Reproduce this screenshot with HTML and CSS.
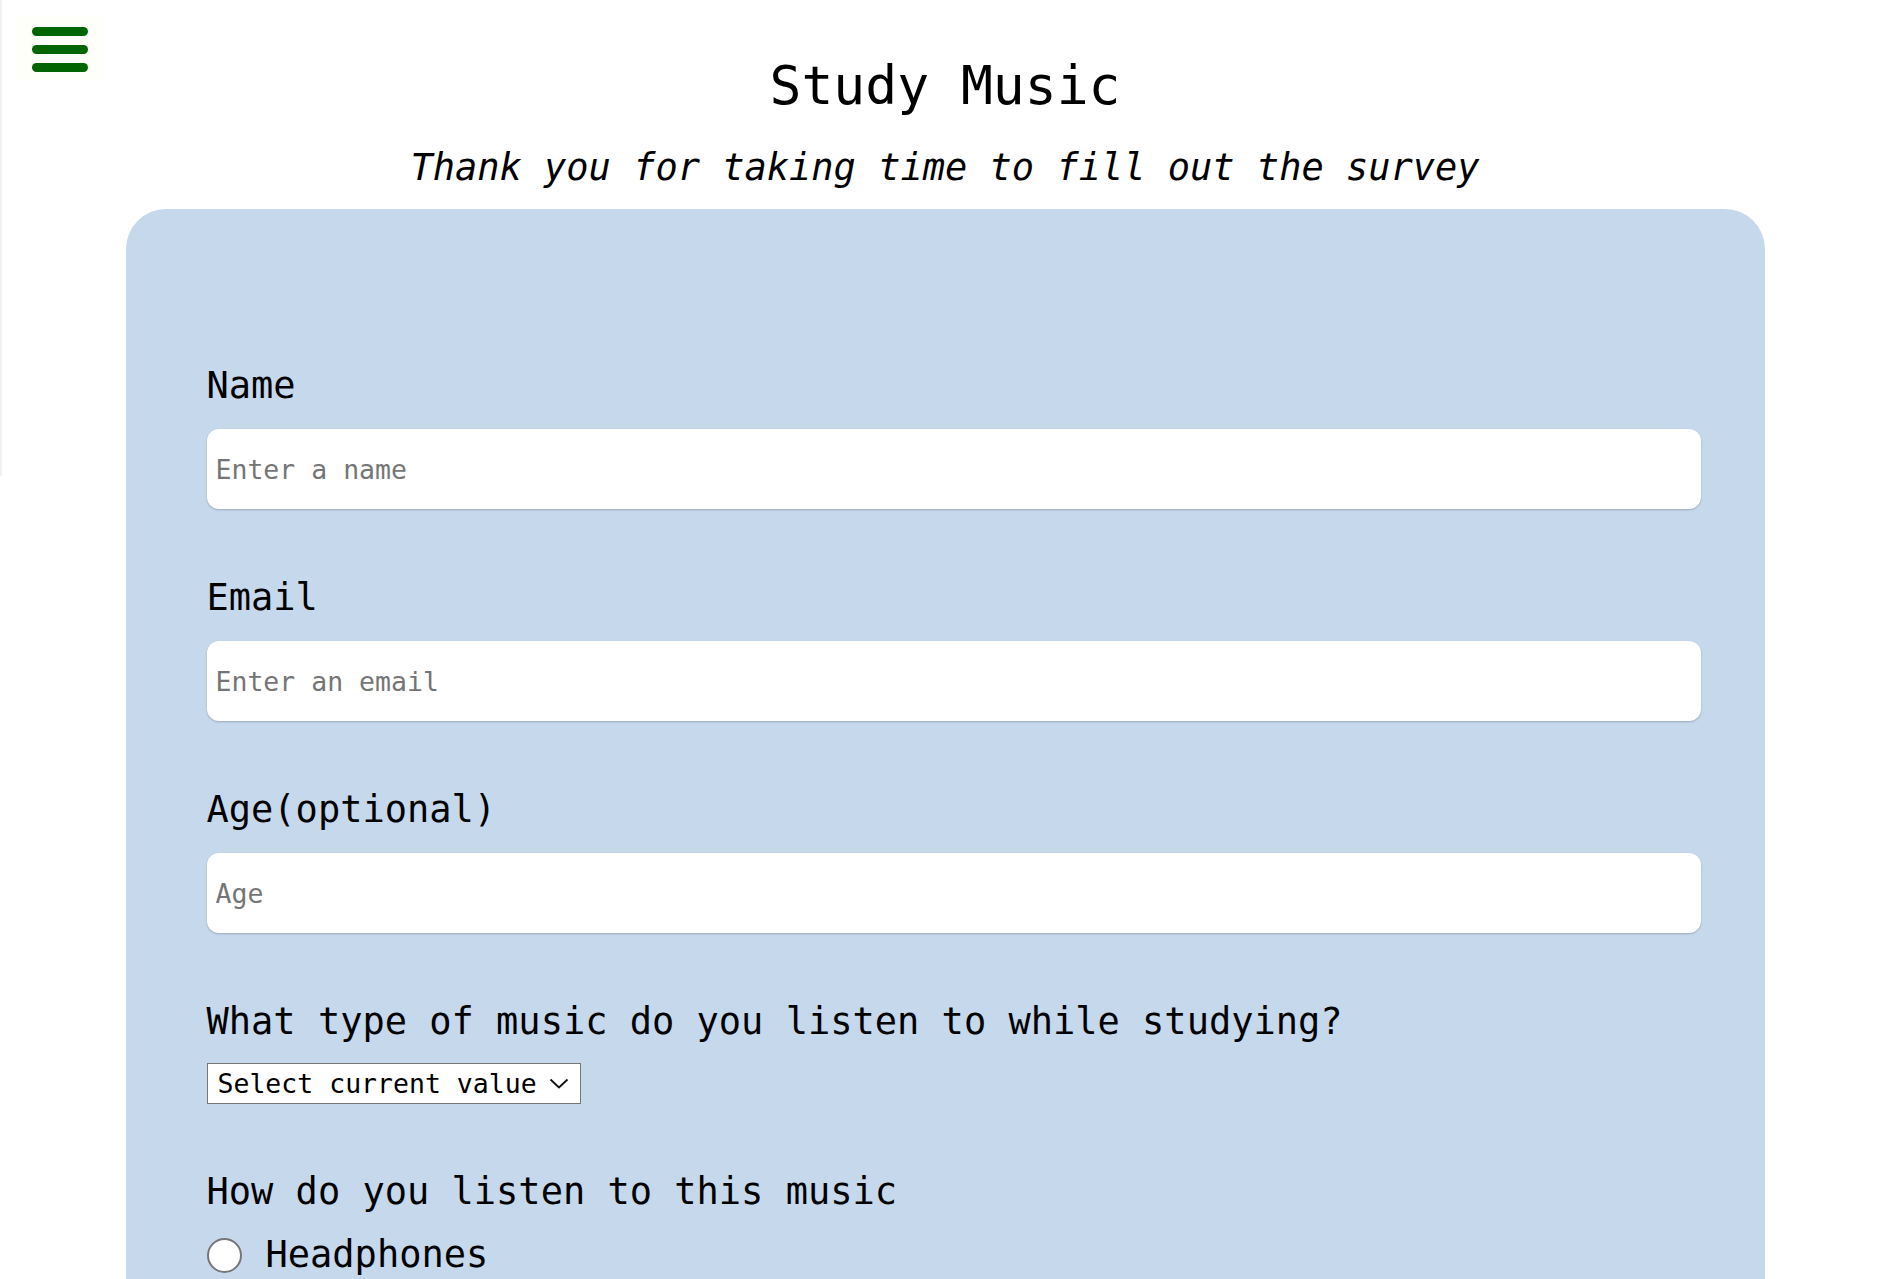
FILE: index.html
```html
<!DOCTYPE html>
<html lang="en">
<head>
<meta charset="utf-8">
<title>Study Music</title>
<link rel="stylesheet" href="styles.css">
</head>
<body>
<div class="edge"></div>
<button class="menu-btn" type="button" aria-label="Open menu">
  <span class="bar"></span>
  <span class="bar"></span>
  <span class="bar"></span>
</button>
<header class="header">
  <h1 class="title">Study Music</h1>
  <p class="subtitle">Thank you for taking time to fill out the survey</p>
</header>
<main class="card">
  <form class="survey">
    <div class="field">
      <label class="label" for="name">Name</label>
      <input class="text-input" id="name" type="text" placeholder="Enter a name">
    </div>
    <div class="field">
      <label class="label" for="email">Email</label>
      <input class="text-input" id="email" type="email" placeholder="Enter an email">
    </div>
    <div class="field">
      <label class="label" for="age">Age(optional)</label>
      <input class="text-input" id="age" type="number" placeholder="Age">
    </div>
    <div class="field field-tight">
      <label class="label" for="type">What type of music do you listen to while studying?</label>
      <div class="select-wrap">
        <select class="select" id="type">
          <option>Select current value</option>
          <option>Classical</option>
          <option>Lo-fi</option>
          <option>Jazz</option>
          <option>Other</option>
        </select>
        <svg class="chevron" width="20" height="11" viewBox="0 0 20 11" aria-hidden="true"><polyline points="1.5,1.5 10,9.5 18.5,1.5" fill="none" stroke="#111" stroke-width="1.8"/></svg>
      </div>
    </div>
    <div class="field field-tight">
      <p class="label">How do you listen to this music</p>
      <label class="radio-row"><input class="radio" type="radio" name="how" value="headphones"><span>Headphones</span></label>
      <label class="radio-row"><input class="radio" type="radio" name="how" value="speakers"><span>Speakers</span></label>
    </div>
  </form>
</main>
</body>
</html>
```
FILE: styles.css
```css
* { box-sizing: border-box; }

html, body {
  margin: 0;
  padding: 0;
  background: #ffffff;
  color: #000;
  font-family: "DejaVu Sans Mono", "Liberation Mono", monospace;
}

.edge {
  position: fixed;
  left: 0;
  top: 0;
  width: 2px;
  height: 476px;
  background: #f1f1f1;
}

.menu-btn {
  position: absolute;
  left: 16px;
  top: 16px;
  width: 87px;
  height: 65px;
  padding: 2px 0 0 0;
  margin: 0;
  border: none;
  background: #fffffa;
  display: flex;
  flex-direction: column;
  align-items: center;
  justify-content: center;
  gap: 9px;
  cursor: pointer;
}

.bar {
  display: block;
  width: 56px;
  height: 9px;
  border-radius: 5px;
  background: #006400;
}

.header {
  padding-top: 56px;
  text-align: center;
}

.title {
  margin: 0;
  font-size: 53px;
  line-height: 60px;
  font-weight: normal;
}

.subtitle {
  margin: 30px 0 0 0;
  font-size: 37px;
  line-height: 44px;
  font-style: italic;
}

.card {
  width: 1639px;
  margin: 19px auto 0 auto;
  padding: 155px 64px 80px 81px;
  background: #c6d8ec;
  border-radius: 40px;
}

.survey {
  display: flex;
  flex-direction: column;
}

.field {
  display: flex;
  flex-direction: column;
  align-items: flex-start;
  gap: 21px;
  margin-bottom: 67px;
}

.field-tight {
  gap: 19px;
  margin-bottom: 66px;
}

.label {
  display: block;
  margin: 0;
  font-size: 37px;
  line-height: 44px;
}

.text-input {
  width: 100%;
  height: 80px;
  margin: 0;
  padding: 0 9px;
  border: none;
  border-radius: 12px;
  background: #ffffff;
  box-shadow: 0 1px 2px rgba(0, 0, 0, 0.22);
  font-family: "DejaVu Sans Mono", "Liberation Mono", monospace;
  font-size: 26.5px;
  color: #000;
  outline: none;
  -moz-appearance: textfield;
}

.text-input::-webkit-outer-spin-button,
.text-input::-webkit-inner-spin-button {
  -webkit-appearance: none;
  margin: 0;
}

.text-input::placeholder {
  color: #757575;
}

.select-wrap {
  position: relative;
  width: 374px;
  height: 41px;
}

.select {
  -webkit-appearance: none;
  appearance: none;
  width: 100%;
  height: 100%;
  margin: 0;
  padding: 0 40px 0 10px;
  border: 1px solid #767676;
  border-radius: 0;
  background: #ffffff;
  font-family: "DejaVu Sans Mono", "Liberation Mono", monospace;
  font-size: 26.5px;
  color: #000;
}

.chevron {
  position: absolute;
  right: 12px;
  top: 15px;
  pointer-events: none;
}

.radio-row {
  display: flex;
  align-items: center;
  gap: 24px;
  font-size: 37px;
  line-height: 44px;
}

.radio {
  -webkit-appearance: none;
  appearance: none;
  width: 35px;
  height: 35px;
  margin: 0;
  border: 2.5px solid #767676;
  border-radius: 50%;
  background: #ffffff;
  flex: none;
}
```
